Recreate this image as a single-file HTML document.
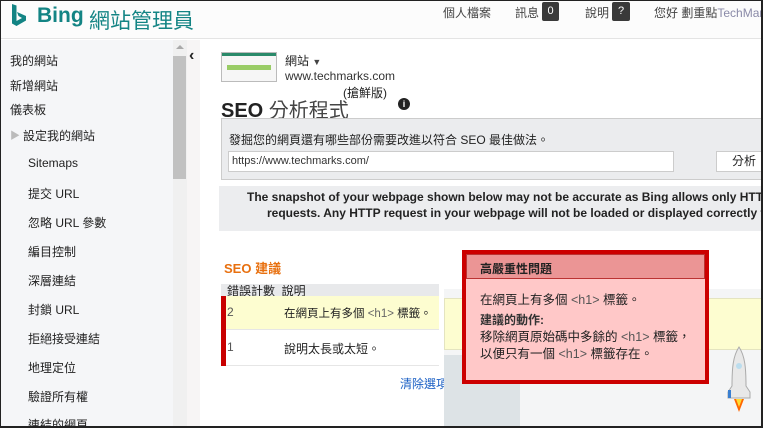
<!DOCTYPE html>
<html><head><meta charset="utf-8"><style>
*{margin:0;padding:0;box-sizing:border-box}
html,body{width:763px;height:428px;overflow:hidden}
body{position:relative;background:#fff;font-family:"Liberation Sans","Noto Sans CJK TC",sans-serif;color:#222;font-size:12px}
#wrap{position:absolute;left:0;top:0;width:763px;height:428px;overflow:hidden}
.a{position:absolute;white-space:nowrap}
#frame{position:absolute;left:0;top:0;width:763px;height:428px;border:1px solid #222;border-right-width:2px;border-bottom-width:2px;z-index:50;pointer-events:none}
.side div{position:absolute;left:10px;font-size:12px}
.side .s{left:28px}
</style></head><body><div id="wrap">
<div id="frame"></div>
<div class="a" style="left:0;top:0;width:763px;height:39px;background:#fcfcfc;border-bottom:1px solid #e4e4e4"></div>
<svg class="a" style="left:11px;top:3px" width="16" height="26" viewBox="0 0 16 26"><path d="M1 1 L5.5 2.5 V18 L11 15 L7.5 13 L6 9 L15 13 V17.5 L5.5 23 L1 20.5 Z" fill="#138484"/></svg>
<div class="a" style="left:37px;top:4px;font-size:21px;font-weight:bold;color:#138484">Bing</div>
<div class="a" style="left:89px;top:5px;font-size:21px;color:#138484">網站管理員</div>
<div class="a" style="left:443px;top:4px;font-size:12px;color:#444">個人檔案</div>
<div class="a" style="left:515px;top:4px;font-size:12px;color:#444">訊息</div>
<div class="a" style="left:542px;top:2px;width:17px;height:19px;background:#3a3a3a;color:#fff;font-size:11px;text-align:center;line-height:19px;border-radius:2px">0</div>
<div class="a" style="left:585px;top:4px;font-size:12px;color:#444">說明</div>
<div class="a" style="left:612px;top:2px;width:18px;height:19px;background:#3a3a3a;color:#fff;font-size:11px;text-align:center;line-height:19px;border-radius:2px">?</div>
<div class="a" style="left:654px;top:4px;width:109px;overflow:hidden;font-size:12px;color:#444">您好 劃重點<span style="color:#8a8aa8">TechMarks</span></div>

<div class="a" style="left:0;top:40px;width:173px;height:388px;background:#f5f6f8"></div>
<div class="a" style="left:173px;top:40px;width:14px;height:388px;background:#f0f0f0"></div>
<div class="a" style="left:173px;top:56px;width:13px;height:123px;background:#c1c1c1"></div>
<div class="a" style="left:176px;top:45px;width:0;height:0;border-left:4px solid transparent;border-right:4px solid transparent;border-bottom:4px solid #aaa"></div>
<div class="a" style="left:187px;top:40px;width:13px;height:388px;background:#f7f5f5"></div>
<div class="a" style="left:189px;top:47px;font-size:16px;font-weight:bold;color:#222">&lsaquo;</div>
<div class="side">
<div style="top:52px">我的網站</div>
<div style="top:77px">新增網站</div>
<div style="top:101px">儀表板</div>
<div style="top:127px;left:23px">設定我的網站</div>
<div style="top:127px;left:10px;color:#bbb;font-size:10px">&#9654;</div>
<div class="s" style="top:156px">Sitemaps</div>
<div class="s" style="top:185px">提交 URL</div>
<div class="s" style="top:214px">忽略 URL 參數</div>
<div class="s" style="top:243px">編目控制</div>
<div class="s" style="top:272px">深層連結</div>
<div class="s" style="top:301px">封鎖 URL</div>
<div class="s" style="top:330px">拒絕接受連結</div>
<div class="s" style="top:359px">地理定位</div>
<div class="s" style="top:388px">驗證所有權</div>
<div class="s" style="top:416px">連結的網頁</div>
</div>

<div class="a" style="left:221px;top:52px;width:56px;height:30px;border:1px solid #bbb;background:#f6f6f6"><div style="height:3px;background:#2a8a6a"></div><div style="margin:9px 5px 0;height:5px;background:#9c6"></div></div>
<div class="a" style="left:285px;top:52px;font-size:12px">網站 <span style="font-size:9px;color:#444">&#9660;</span></div>
<div class="a" style="left:285px;top:69px;font-size:12px;color:#333">www.techmarks.com</div>
<div class="a" style="left:343px;top:84px;font-size:12px">(搶鮮版)</div>
<div class="a" style="left:221px;top:94px;font-size:20px;color:#444"><b style="color:#222;font-weight:bold">SEO</b> 分析程式</div>
<div class="a" style="left:398px;top:98px;width:12px;height:12px;border-radius:50%;background:#222;color:#fff;font-size:9px;font-weight:bold;text-align:center;line-height:12px">i</div>

<div class="a" style="left:221px;top:118px;width:542px;height:62px;background:#ebecee;border:1px solid #ccc"></div>
<div class="a" style="left:229px;top:131px;font-size:12px">發掘您的網頁還有哪些部份需要改進以符合 SEO 最佳做法。</div>
<div class="a" style="left:228px;top:151px;width:446px;height:21px;background:#fff;border:1px solid #ccc;font-size:11px;line-height:19px;padding-left:3px;color:#333">https://www.techmarks.com/</div>
<div class="a" style="left:716px;top:151px;width:47px;height:21px;background:#fff;border:1px solid #ccc;border-right:none;font-size:12px;line-height:19px;padding-left:15px;overflow:hidden">分析</div>

<div class="a" style="left:219px;top:186px;width:544px;height:45px;background:#ecedef"></div>
<div class="a" style="left:247px;top:190px;width:516px;overflow:hidden;font-size:12px;font-weight:bold;color:#222">The snapshot of your webpage shown below may not be accurate as Bing allows only HTTPS</div>
<div class="a" style="left:267px;top:206px;width:496px;overflow:hidden;font-size:12px;font-weight:bold;color:#222">requests. Any HTTP request in your webpage will not be loaded or displayed correctly through</div>

<div class="a" style="left:224px;top:258px;font-size:13px;font-weight:bold;color:#e8700f">SEO 建議</div>
<div class="a" style="left:221px;top:284px;width:218px;height:12px;background:#e8e9eb"></div>
<div class="a" style="left:227px;top:282px;font-size:12px">錯誤計數&nbsp; 說明</div>
<div class="a" style="left:221px;top:296px;width:218px;height:34px;background:#fdfdd0;border-bottom:1px solid #e6e6e6"></div>
<div class="a" style="left:221px;top:330px;width:218px;height:36px;background:#fff;border-bottom:1px solid #e6e6e6"></div>
<div class="a" style="left:221px;top:296px;width:5px;height:70px;background:#c80000"></div>
<div class="a" style="left:227px;top:305px;font-size:12px;color:#555">2</div>
<div class="a" style="left:284px;top:305px;font-size:11.5px">在網頁上有多個 <span style="color:#666">&lt;h1&gt;</span> 標籤。</div>
<div class="a" style="left:227px;top:340px;font-size:12px;color:#555">1</div>
<div class="a" style="left:284px;top:340px;font-size:12px">說明太長或太短。</div>
<div class="a" style="left:400px;top:375px;font-size:12px;color:#1a5fc4">清除選項</div>

<div class="a" style="left:444px;top:289px;width:319px;height:139px;background:#f4f5f6"></div>
<div class="a" style="left:444px;top:298px;width:319px;height:52px;background:#fdfdd0;border:1px solid #e4e4c0"></div>
<div class="a" style="left:444px;top:355px;width:76px;height:73px;background:#dde3e6"></div>

<div class="a" style="left:462px;top:250px;width:247px;height:134px;background:#ffc8c8;border:4px solid #cc0000"></div>
<div class="a" style="left:466px;top:254px;width:239px;height:25px;background:#eb9595;border:1px solid #b33"></div>
<div class="a" style="left:480px;top:260px;font-size:12px;font-weight:bold;color:#222">高嚴重性問題</div>
<div class="a" style="left:480px;top:289px;font-size:12.5px">在網頁上有多個 <span style="color:#555">&lt;h1&gt;</span> 標籤。</div>
<div class="a" style="left:480px;top:311px;font-size:12px;font-weight:bold;color:#333">建議的動作:</div>
<div class="a" style="left:480px;top:326px;font-size:12.5px">移除網頁原始碼中多餘的 <span style="color:#555">&lt;h1&gt;</span> 標籤，</div>
<div class="a" style="left:480px;top:343px;font-size:12.5px">以便只有一個 <span style="color:#555">&lt;h1&gt;</span> 標籤存在。</div>

<svg class="a" style="left:724px;top:346px" width="30" height="68" viewBox="0 0 30 68"><path d="M15 1 C9 10 8 22 8 40 L4 46 L4 52 L26 52 L26 46 L22 40 C22 22 21 10 15 1Z" fill="#e8e8e8" stroke="#aaa"/><circle cx="15" cy="20" r="3" fill="#bde"/><rect x="4" y="44" width="3" height="8" fill="#3a7fd0"/><path d="M10 53 L20 53 L15 66Z" fill="#f60"/><path d="M12 53 L18 53 L15 61Z" fill="#fd3"/></svg>
</div></body></html>
